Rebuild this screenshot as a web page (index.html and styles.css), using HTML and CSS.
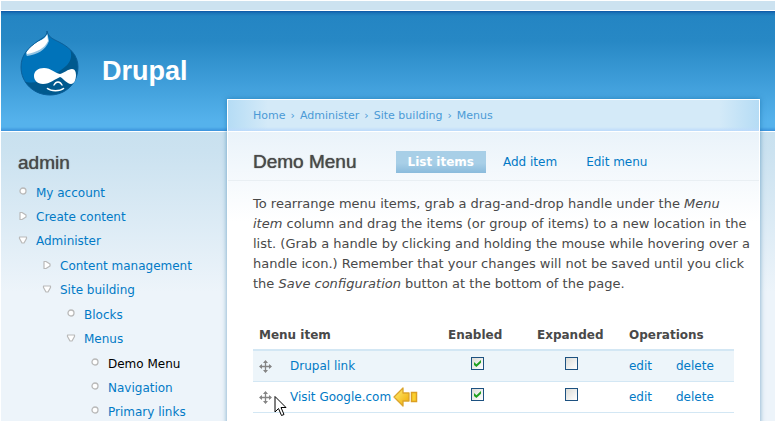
FILE: index.html
```
<!DOCTYPE html>
<html lang="en">

<head>
  <meta charset="UTF-8">
  <meta name="viewport" content="width=device-width, initial-scale=1.0">
  <title>Demo Menu | Drupal</title>
  <link rel="stylesheet" href="styles.css">
</head>

<body>
  <svg class="sprite" aria-hidden="true">
    <symbol id="leaf" viewBox="0 0 10 10">
      <circle cx="5" cy="4" r="3" fill="#fff" stroke="#b9b9b9" stroke-width="1.3" />
    </symbol>
    <symbol id="collapsed" viewBox="0 0 10 10">
      <path d="M2 1.500h2L8 4v2L4 8.500H2z" fill="#fff" stroke="#b9b9b9" stroke-width="1.200" stroke-linejoin="round" />
    </symbol>
    <symbol id="expanded" viewBox="0 0 10 10">
      <path d="M1.500 2v1.500L4 8h2L8.500 3.500V2z" fill="#fff" stroke="#b9b9b9" stroke-width="1.200" stroke-linejoin="round" />
    </symbol>
    <symbol id="handle" viewBox="0 0 13 13">
      <path d="M6.500 1v11M1 6.500h11" stroke="#858585" stroke-width="1.300" />
      <path d="M6.500 0l2.500 3h-5zM6.500 13l2.500-3h-5zM0 6.500l3-2.500v5zM13 6.500l-3-2.500v5z" fill="#858585" />
    </symbol>
  </svg>

  <div id="wrapper">
    <div class="left">
      <header class="brand">
        <svg class="logo" viewBox="0 0 72 76" aria-hidden="true">
          <defs>
            <clipPath id="drop">
              <path d="M33 7C34 13 39 15 45 18C57 24 64 32 64 43C64 60 51 71 36 71C20 71 7 59 7 43C7 31 14 24 24 17C30 13 33 12 33 7z" />
            </clipPath>
          </defs>
          <g clip-path="url(#drop)">
            <path d="M0 0h72v76H0z" fill="#0073ba" />
            <path d="M56 25C59 34 56 40 47 46C36 54 22 62 9 57L7 76H72V25z" fill="#00598e" />
            <path d="M33 8L35 17C31 27 24 30 13 32C11 30 13 25 22 19C30 14 33 13 33 8z" fill="#93c5e4" />
            <path d="M33 9L34 17C30 25 23 28 13 30C11 28 15 23 23 18C30 15 33 13 33 9z" fill="#fff" />
          </g>
          <path d="M33 7C34 13 39 15 45 18C57 24 64 32 64 43C64 60 51 71 36 71C20 71 7 59 7 43C7 31 14 24 24 17C30 13 33 12 33 7z" fill="none" stroke="#0c5f99" />
          <path d="M30 44C37 44 41 49 46 50C50 49 54 45 58 45C61 45 62 48 62 51C62 56 60 60 57 60C53 60 49 54 46 53C41 55 36 60 29 60C23 60 20 56 20 52C20 47 24 44 30 44z" fill="#fff" />
          <path d="M40 61C42 57 46 57 48 61" fill="none" stroke="#fff" stroke-width="1.400" stroke-linecap="round" />
          <path d="M33.500 64.500C37 67.500 46 67.500 49.500 64.500" fill="none" stroke="#fff" stroke-width="1.600" stroke-linecap="round" />
        </svg>
        <a class="site-name" href="#">Drupal</a>
      </header>

      <nav class="sidebar">
        <h2>admin</h2>
        <ul class="menu">
          <li><svg class="bullet"><use href="#leaf" /></svg><a href="#">My account</a></li>
          <li><svg class="bullet"><use href="#collapsed" /></svg><a href="#">Create content</a></li>
          <li><svg class="bullet"><use href="#expanded" /></svg><a href="#">Administer</a>
            <ul>
              <li><svg class="bullet"><use href="#collapsed" /></svg><a href="#">Content management</a></li>
              <li><svg class="bullet"><use href="#expanded" /></svg><a href="#">Site building</a>
                <ul>
                  <li><svg class="bullet"><use href="#leaf" /></svg><a href="#">Blocks</a></li>
                  <li><svg class="bullet"><use href="#expanded" /></svg><a href="#">Menus</a>
                    <ul>
                      <li><svg class="bullet"><use href="#leaf" /></svg><a class="active" href="#">Demo Menu</a></li>
                      <li><svg class="bullet"><use href="#leaf" /></svg><a href="#">Navigation</a></li>
                      <li><svg class="bullet"><use href="#leaf" /></svg><a href="#">Primary links</a></li>
                    </ul>
                  </li>
                </ul>
              </li>
            </ul>
          </li>
        </ul>
      </nav>
    </div>

    <main class="center">
      <div class="breadcrumb">
        <a href="#">Home</a><span>›</span><a href="#">Administer</a><span>›</span><a href="#">Site building</a><span>›</span><a href="#">Menus</a>
      </div>
      <div class="squeeze">
        <div class="tabs-wrapper">
          <h2>Demo Menu</h2>
          <ul class="tabs">
            <li><a class="active" href="#">List items</a></li>
            <li><a href="#">Add item</a></li>
            <li><a href="#">Edit menu</a></li>
          </ul>
        </div>
        <div class="content">
          <p>To rearrange menu items, grab a drag-and-drop handle under the <em>Menu item</em> column and drag the items (or group of items) to a new location in the list. (Grab a handle by clicking and holding the mouse while hovering over a handle icon.) Remember that your changes will not be saved until you click the <em>Save configuration</em> button at the bottom of the page.</p>
          <table>
            <colgroup>
              <col>
              <col class="col-enabled">
              <col class="col-expanded">
              <col class="col-edit">
              <col class="col-delete">
            </colgroup>
            <thead>
              <tr>
                <th>Menu item</th>
                <th>Enabled</th>
                <th>Expanded</th>
                <th colspan="2">Operations</th>
              </tr>
            </thead>
            <tbody>
              <tr class="odd">
                <td>
                  <div class="title"><svg class="handle"><use href="#handle" /></svg><a href="#">Drupal link</a></div>
                </td>
                <td class="check enabled"><input type="checkbox" aria-label="Enable Drupal link" checked></td>
                <td class="check expanded"><input type="checkbox" aria-label="Expand Drupal link"></td>
                <td><a href="#">edit</a></td>
                <td><a href="#">delete</a></td>
              </tr>
              <tr>
                <td>
                  <div class="title"><svg class="handle"><use href="#handle" /></svg><a href="#">Visit Google.com</a>
                    <svg class="arrow" viewBox="0 0 25 20" aria-hidden="true">
                      <defs>
                        <linearGradient id="gold" x2="1" y2="1">
                          <stop offset="0" stop-color="#fff27a" />
                          <stop offset="1" stop-color="#f0a800" />
                        </linearGradient>
                      </defs>
                      <path d="M1 10L10 1V6H16V14H10V19z" fill="url(#gold)" stroke="#dba52c" stroke-width="1.300" stroke-linejoin="round" />
                      <path d="M18.500 5.500h5v9h-5z" fill="#fbd02c" stroke="#dc9f22" stroke-width="1.500" />
                    </svg>
                    <svg class="pointer" viewBox="0 0 13 22" aria-hidden="true">
                      <path d="M1 1.500V17L4.500 13.500L7.500 20.500L10 19.500L7 12.500H12z" fill="#fff" stroke="#000" />
                    </svg>
                  </div>
                </td>
                <td class="check enabled"><input type="checkbox" aria-label="Enable Visit Google.com" checked></td>
                <td class="check expanded"><input type="checkbox" aria-label="Expand Visit Google.com"></td>
                <td><a href="#">edit</a></td>
                <td><a href="#">delete</a></td>
              </tr>
            </tbody>
          </table>
        </div>
      </div>
    </main>
  </div>
</body>

</html>
```
FILE: styles.css
```
* {
  box-sizing: border-box;
}

body {
  margin: 0;
  height: 100vh;
  padding: 1px;
  overflow: hidden;
  background: #fff;
  color: #494949;
  font: 12px/20px Verdana, "DejaVu Sans", sans-serif;
}

a {
  color: #027ac6;
  text-decoration: none;
}

h2 {
  margin: 0;
  font: 19px/24px "Liberation Sans", Arial, sans-serif;
  color: #494949;
  text-shadow: 0 0 1px #494949;
}

ul {
  margin: 0;
  padding: 0;
  list-style: none;
}

.sprite {
  display: none;
}

/* top strip, blue header band and the fading page ground */
#wrapper {
  display: grid;
  grid-template-columns: 226px minmax(0, 1fr);
  height: 100%;
  padding: 10px 15px 0 0;
  overflow: hidden;
  background:
    linear-gradient(#cce2f0, #cce2f0) 0 0 / 100% 9px no-repeat,
    linear-gradient(#fff, #fff) 0 9px / 100% 1px no-repeat,
    linear-gradient(#0d55a5 0, #1b74b8 2px, #2485c3 5px, #2788c5 30px, #55b2ec 110px, #55b2ec 116px, #3a92dc 120px) 0 10px / 100% 120px no-repeat,
    linear-gradient(#fff, #fff) 0 130px / 100% 1px no-repeat,
    linear-gradient(#c9e1ef, #cbe2f0 20px, #edf4fa 160px) 0 131px / 100% 160px no-repeat,
    #edf4fa;
}

.brand {
  display: flex;
  align-items: center;
  gap: 16px;
  height: 120px;
  padding: 0 0 18px 13px;
}

.logo {
  width: 72px;
  height: 76px;
}

.site-name {
  color: #fff;
  font: bold 27px/32px "Liberation Sans", Arial, sans-serif;
  padding-top: 18px;
}

.sidebar {
  padding: 20px 0 0 17px;
}

.menu {
  padding-top: 4px;
}

.menu li {
  padding-top: 4px;
}

.menu li ul {
  padding: 1px 0 0 24px;
}

.bullet {
  width: 10px;
  height: 10px;
  margin-right: 8px;
  vertical-align: 0;
}

.menu .active {
  color: #000;
}

.center {
  margin-top: 88px;
  border: solid #fff;
  border-width: 1px 1px 0;
  background: #fff;
  box-shadow: 0 0 5px rgba(0, 90, 150, .5);
}

.breadcrumb {
  display: flex;
  gap: 5px;
  height: 31px;
  padding: 7px 25px;
  background:
    linear-gradient(transparent 27px, #bcdafb),
    linear-gradient(90deg, #b5dcf5, #d4eaf8 40px, #d4eaf8 calc(100% - 40px), #b5dcf5);
  color: #4b9ad6;
  font-size: 11px;
  line-height: 18px;
}

.breadcrumb a {
  color: #4b9ad6;
}

.squeeze {
  border-top: 1px solid #fff;
  background: linear-gradient(#eaf3fa, #fff 90px);
}

.tabs-wrapper {
  display: flex;
  align-items: center;
  gap: 39px;
  height: 49px;
  padding: 12px 25px 0;
  border-bottom: 1px solid #e9eff3;
}

.tabs {
  display: flex;
  gap: 5px;
}

.tabs a {
  display: block;
  padding: 1px 12px;
}

.tabs .active {
  background: linear-gradient(#a8cfe7 55%, #8abbdc);
  color: #fff;
  font-weight: bold;
}

.content {
  padding: 13px 25px;
}

p {
  margin: 0 -18px 26px 0;
  font-size: 13px;
}

table {
  width: 100%;
  border-collapse: collapse;
  table-layout: fixed;
}

th,
td {
  padding: 5px 0 5px 6px;
  text-align: left;
}

th {
  padding-bottom: 4px;
  border-bottom: 2px solid #d3e7f4;
}

td {
  border-bottom: 1px solid #d3e7f4;
}

.odd {
  background: #edf5fa;
}

.col-enabled {
  width: 89px;
}

.col-expanded {
  width: 92px;
}

.col-edit {
  width: 47px;
}

.col-delete {
  width: 64px;
}

td.enabled {
  padding-right: 24px;
}

td.expanded {
  padding-right: 16px;
}

td.check {
  text-align: center;
}

.title {
  position: relative;
  display: flex;
  align-items: center;
}

.handle {
  width: 13px;
  height: 13px;
  margin-right: 18px;
}

.arrow {
  width: 25px;
  height: 20px;
  margin-left: 2px;
}

.pointer {
  position: absolute;
  left: 15px;
  top: 8px;
  width: 13px;
  height: 22px;
}

input {
  appearance: none;
  display: inline-block;
  width: 13px;
  height: 13px;
  margin: 0;
  border: 1px solid #1d5180;
  background: linear-gradient(135deg, #dcdcd7, #fff);
}

input:checked::before {
  content: "";
  display: block;
  width: 7px;
  height: 7px;
  margin: 2px;
  background: #21a121;
  clip-path: polygon(0 29%, 35% 60%, 100% 0, 100% 40%, 35% 100%, 0 70%);
}
```
